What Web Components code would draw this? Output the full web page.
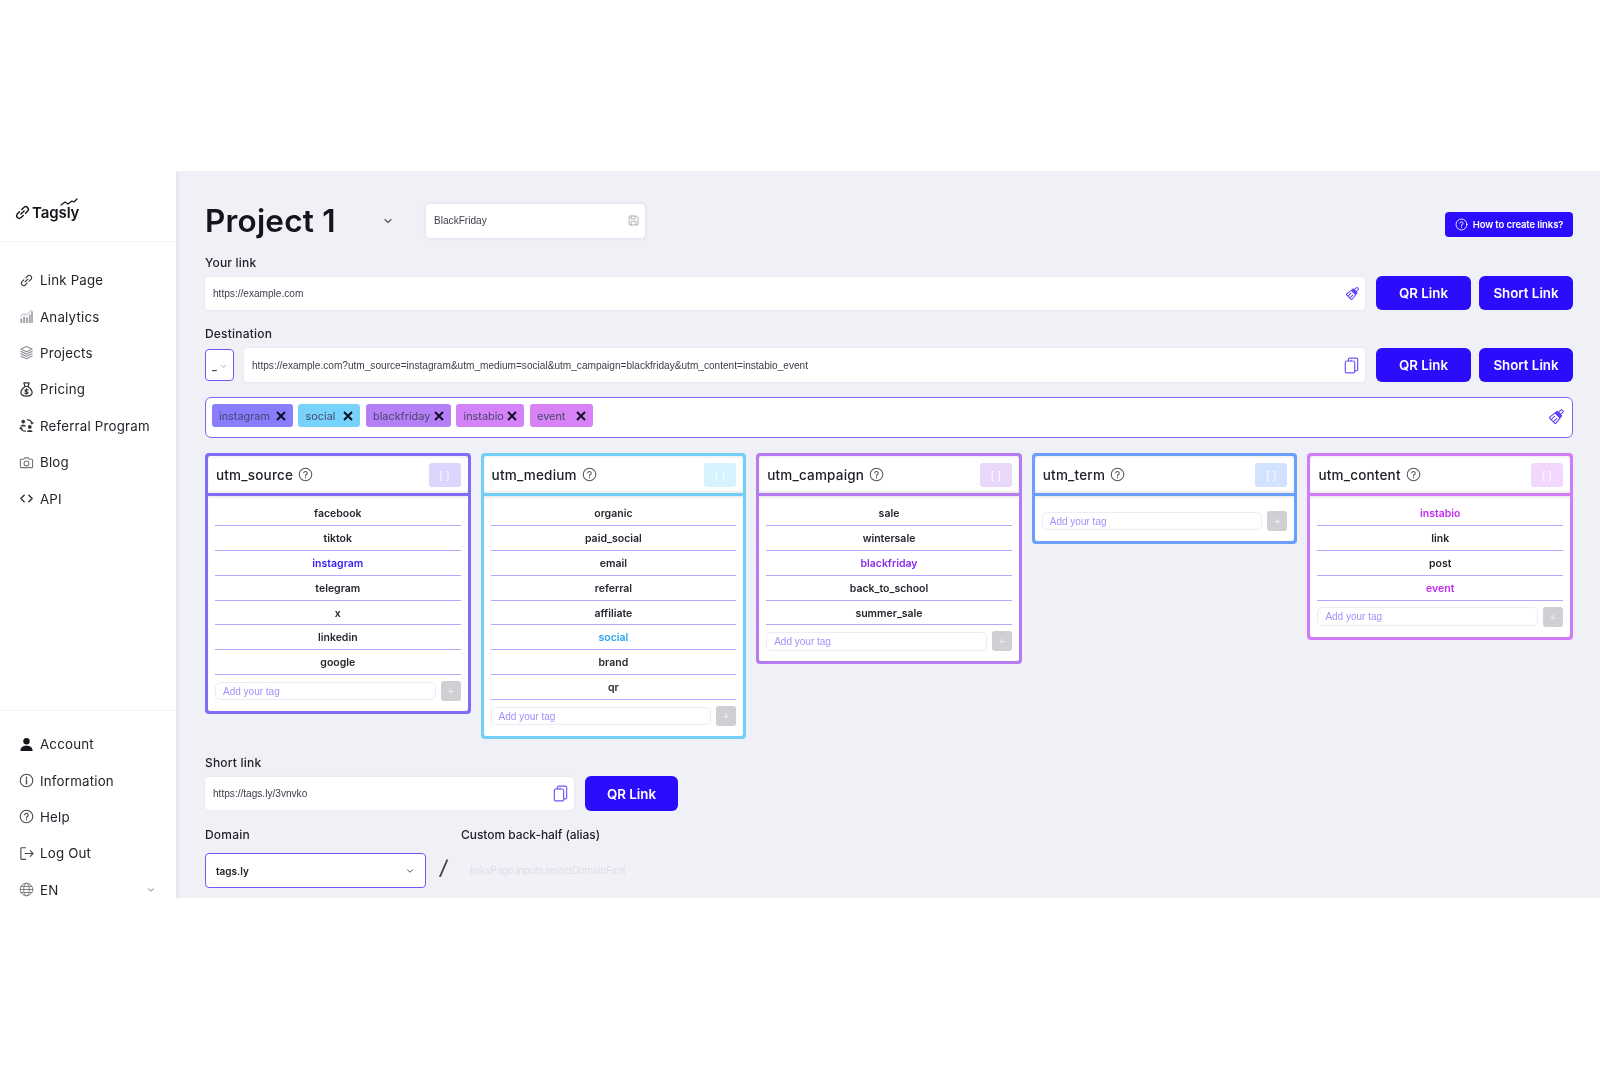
<!DOCTYPE html>
<html lang="en"><head><meta charset="utf-8"><title>Tagsly</title>
<style>
html,body{margin:0;background:#fff;}
body{font-family:"Inter","Liberation Sans",sans-serif;color:#16161e;}
</style></head><body>
<app-shell>
  <side-bar slot="side"></side-bar>
  <main-pane slot="main"></main-pane>
</app-shell>
<script>
const ICONS={
 link:'<path d="M6.500 9.500l3-3M5.200 7.300L3 9.500a2.500 2.500 0 0 0 3.500 3.500L8.700 10.800M7.300 5.200L9.500 3a2.500 2.500 0 0 1 3.500 3.500L10.800 8.700"/>',
 chart:'<g fill="currentColor" stroke="none"><rect x="1.500" y="10" width="2" height="5"/><rect x="4.500" y="8" width="2" height="7"/><rect x="7.500" y="9" width="2" height="6"/><rect x="10.500" y="6" width="2" height="9"/><rect x="13" y="2.500" width="1.800" height="12.500"/></g><path d="M1.500 7.500L5 5l3 1.500L13 1.500" stroke-width=".9"/>',
 layers:'<path d="M8 1.500l6 2.800-6 2.800-6-2.800zM2 6.800l6 2.800 6-2.800M2 9.300l6 2.800 6-2.800M2 11.800l6 2.800 6-2.800"/>',
 bag:'<path d="M5.200 1h5.600L9.600 4.800H6.400zM6.400 4.800C3.800 6.800 2 9 2 11.200c0 2.800 2.400 3.800 6 3.800s6-1 6-3.800c0-2.200-1.800-4.400-4.400-6.400"/><path d="M8 7.200v5.600M9.700 8.500C9 7.800 6.400 7.900 6.400 9.300S9.700 10 9.700 11.400 7 12.700 6.300 11.800" stroke-width="1.200"/>',
 ref:'<circle cx="4.500" cy="3.800" r="2" fill="currentColor" stroke="none"/><path d="M1.500 9c0-2.400 6-2.400 6 0z" fill="currentColor" stroke="none"/><circle cx="11.500" cy="9.500" r="2" fill="currentColor" stroke="none"/><path d="M8.500 15c0-3 6-3 6 0z" fill="currentColor" stroke="none"/><path d="M9 2c2.500 0 4.500 1.500 4.800 4M12.800 4.800l1 1.400 1.200-1.200M7 14c-2.500 0-4.500-1-5-3.500M3.200 11.400l-1.100-1.300L1 11.300" stroke-width="1.200"/>',
 camera:'<path d="M2.500 4.500h2.500l1-1.500h4l1 1.500h2.500a1 1 0 0 1 1 1v7a1 1 0 0 1-1 1h-11a1 1 0 0 1-1-1v-7a1 1 0 0 1 1-1z"/><circle cx="8" cy="9" r="2.600"/>',
 code:'<path d="M5.500 4.500L2 8l3.500 3.500M10.500 4.500L14 8l-3.500 3.500" stroke-width="1.600"/>',
 user:'<circle cx="8" cy="4.500" r="3.400" fill="currentColor" stroke="none"/><path d="M1.500 15c0-4 2.500-5.700 6.500-5.700s6.500 1.700 6.500 5.700z" fill="currentColor" stroke="none"/>',
 info:'<circle cx="8" cy="8" r="6.700"/><path d="M8 7.200v4.200M8 4.400v1.200" stroke-width="1.500"/>',
 help:'<circle cx="8" cy="8" r="6.700"/><path d="M6.100 6.300A1.900 1.900 0 1 1 8 8.500v1.100M8 11.300v.3"/>',
 logout:'<path d="M7 1.800H3a1 1 0 0 0-1 1v10.400a1 1 0 0 0 1 1h4M6.500 8H15M12 5l3 3-3 3"/>',
 globe:'<circle cx="8" cy="8" r="6.700"/><ellipse cx="8" cy="8" rx="3" ry="6.700"/><path d="M1.300 8h13.400M2.300 4.800h11.400M2.300 11.200h11.400"/>',
 copy:'<rect x="2.200" y="3.800" width="8.800" height="11.200" rx="1.300"/><path d="M5 3.800V2.300A1.300 1.300 0 0 1 6.300 1h6.200a1.300 1.300 0 0 1 1.300 1.300v9.400a1.300 1.300 0 0 1-1.300 1.300H11M7.500 3.800V2.800"/>',
 broom:'<g transform="rotate(45 8 8)"><rect x="6.500" y=".2" width="3" height="4.300" rx=".6"/><rect x="4.800" y="4.500" width="6.400" height="2.600" fill="currentColor"/><path d="M4.500 7.100h7l1 7.600h-9zM6.500 9.800v4.900M9.500 9.800v4.900"/></g>',
 save:'<path d="M2.500 3.500a1 1 0 0 1 1-1h8l2 2v8a1 1 0 0 1-1 1h-9a1 1 0 0 1-1-1zM5 2.500v3.500h5V2.500M5 13.500V9h6v4.500"/>',
 chev:'<path d="M4 6l4 4 4-4" stroke-width="1.500"/>'
};
const ico=(n,s=16,c='currentColor',w=1.1)=>`<svg width="${s}" height="${s}" viewBox="0 0 16 16" fill="none" stroke="${c}" color="${c}" stroke-width="${w}" stroke-linecap="round" stroke-linejoin="round" aria-hidden="true">${ICONS[n]}</svg>`;

class AppShell extends HTMLElement{constructor(){super();this.attachShadow({mode:'open'}).innerHTML=`<style>
:host{display:block;padding:171px 0 169px;}
.f{display:grid;grid-template-columns:176px 1fr;height:727px;background:#f0f0f7;overflow:hidden;filter:blur(.3px)}
</style><div class="f"><slot name="side"></slot><slot name="main"></slot></div>`}}
customElements.define('app-shell',AppShell);

class NavItem extends HTMLElement{connectedCallback(){const i=this.getAttribute('icon'),c=this.getAttribute('tone')||'#4b4c54',w=this.getAttribute('sw')||1.2;
this.attachShadow({mode:'open'}).innerHTML=`<style>
:host{display:flex;align-items:center;height:36.4px;padding-left:18.500px;gap:6.500px;font:400 13.300px "Inter",sans-serif;color:#24242c;letter-spacing:.2px}
svg{flex:none}.c{margin-left:auto;margin-right:20px;display:flex}
</style>${ico(i,15,c,w)}<slot></slot>${this.hasAttribute('chev')?`<span class="c">${ico('chev',10,'#777')}</span>`:''}`}}
customElements.define('nav-item',NavItem);

class SideBar extends HTMLElement{constructor(){super();this.attachShadow({mode:'open'}).innerHTML=`<style>
:host{display:block;background:#fff;box-shadow:1px 0 3px rgba(120,120,160,.15)}
.logo{height:71px;box-sizing:border-box;border-bottom:1px solid #f3f3f6;display:flex;align-items:center;padding:13px 0 0 13.500px;gap:1.500px;font:600 15px "Inter",sans-serif;color:#14141a;letter-spacing:-.1px}
.logo b{font-weight:600;position:relative}
.logo svg.sw{position:absolute;left:28px;top:-5px}
.top{height:469px;box-sizing:border-box;padding-top:20px;border-bottom:1px solid #f3f3f6}
.bot{padding:15px 0 0}
</style>
<div class="logo">${ico('link',17,'#14141a',1.300)}<b>Tagsly<svg class="sw" width="18" height="8" viewBox="0 0 18 8" fill="none" stroke="#14141a" stroke-width="1.200" stroke-linecap="round" stroke-linejoin="round"><path d="M1 7l4-3 3 2 4-3 2 1 3-3"/></svg></b></div>
<div class="top">
<nav-item icon="link" tone="#33343a">Link Page</nav-item><nav-item icon="chart" tone="#a2a3aa">Analytics</nav-item><nav-item icon="layers" tone="#8f9097">Projects</nav-item><nav-item icon="bag" tone="#33343a" sw="1.300">Pricing</nav-item><nav-item icon="ref" tone="#33343a">Referral Program</nav-item><nav-item icon="camera" tone="#77787e">Blog</nav-item><nav-item icon="code" tone="#33343a">API</nav-item>
</div>
<div class="bot">
<nav-item icon="user" tone="#16161e">Account</nav-item><nav-item icon="info">Information</nav-item><nav-item icon="help">Help</nav-item><nav-item icon="logout">Log Out</nav-item><nav-item icon="globe" tone="#77787e" sw="1" chev>EN</nav-item>
</div>`;
}}
customElements.define('side-bar',SideBar);

class BlueBtn extends HTMLElement{constructor(){super();this.attachShadow({mode:'open'}).innerHTML=`<style>
:host{display:inline-flex;align-items:center;justify-content:center;box-sizing:border-box;width:95px;height:34px;background:#2c0dfb;color:#fff;border-radius:6px;font:600 13.300px "Inter",sans-serif;white-space:nowrap;flex:none}
</style><slot></slot>`}}
customElements.define('blue-btn',BlueBtn);

class TextBox extends HTMLElement{connectedCallback(){const i=this.getAttribute('icon');
this.attachShadow({mode:'open'}).innerHTML=`<style>
:host{display:flex;align-items:center;box-sizing:border-box;height:33px;background:#fff;border-radius:4px;padding:0 5px 0 8px;font:10.100px "Liberation Sans",sans-serif;color:#3c3d48;box-shadow:0 0 2px rgba(120,120,160,.12);min-width:0}
span{flex:1;white-space:nowrap;overflow:hidden}svg{flex:none}
</style><span><slot></slot></span>${i?ico(i,+(this.getAttribute('size')||15),this.getAttribute('tone')||'#6e58f6',this.getAttribute('sw')||1.1):''}`}}
customElements.define('text-box',TextBox);

class TagChip extends HTMLElement{connectedCallback(){this.attachShadow({mode:'open'}).innerHTML=`<style>
:host{display:inline-flex;align-items:center;justify-content:space-between;box-sizing:border-box;height:23px;padding:0 7px 0 7.500px;border-radius:3px;background:${this.getAttribute('bg')};width:${this.getAttribute('w')}px;font:400 10.900px "Inter",sans-serif;color:#47476e;flex:none}
svg{flex:none}
</style><slot></slot><svg width="10" height="10" viewBox="0 0 10 10" fill="none" stroke="#0d0d22" stroke-width="1.900"><path d="M1 1l8 8M9 1L1 9"/></svg>`}}
customElements.define('tag-chip',TagChip);

class UtmColumn extends HTMLElement{connectedCallback(){
const col=this.getAttribute('col'),name=this.getAttribute('name'),soft=this.getAttribute('soft');
const items=(this.getAttribute('items')||'').split(',').filter(Boolean).map(s=>{const[t,c]=s.split(':');return `<div class="it"${c?` style="color:${c}"`:''}>${t}</div>`}).join('');
this.attachShadow({mode:'open'}).innerHTML=`<style>
:host{display:block;align-self:start;background:${col};border-radius:4px;padding:3px}
.hd{height:37px;background:#fff;border-radius:2px 2px 0 0;display:flex;align-items:center;padding:0 7px 0 8px;font:450 13.500px "Inter",sans-serif;color:#20202a;gap:5px;letter-spacing:.2px;box-shadow:inset 0 -2px 2px rgba(0,0,0,.07),inset 0 2px 2px rgba(0,0,0,.05)}
.br{margin-left:auto;width:32px;height:24px;border-radius:3px;background:${soft};color:rgba(255,255,255,.85);display:flex;align-items:center;justify-content:center;font:11px "Liberation Sans",sans-serif}
.bd{margin-top:3px;background:#fff;border-radius:0 0 2px 2px;padding:5px 7px 10px;box-shadow:inset 0 2px 2px rgba(0,0,0,.07)}
.it{height:24.900px;box-sizing:border-box;display:flex;align-items:center;justify-content:center;border-bottom:1.300px solid #b5a7fb;font:600 10.500px "Inter",sans-serif;color:#26262e;padding-top:1px}
.add{display:flex;align-items:center;gap:5px;margin-top:6px}
.bd.e .add{margin-top:10px}
.in{flex:1;height:18.500px;box-sizing:border-box;border:1px solid #ececf2;border-radius:5px;padding-left:7px;display:flex;align-items:center;font:10px "Liberation Sans",sans-serif;color:#a193fb}
.pl{width:20px;height:20px;border-radius:3px;background:#cfcfd4;color:#eee;display:flex;align-items:center;justify-content:center;font:11px "Liberation Sans",sans-serif}
svg{flex:none}
</style><div class="hd"><span>${name}</span>${ico('help',15,'#55565e')}<div class="br">[ ]</div></div>
<div class="bd${items?'':' e'}">${items}<div class="add"><div class="in">Add your tag</div><div class="pl">+</div></div></div>`}}
customElements.define('utm-column',UtmColumn);

class MainPane extends HTMLElement{constructor(){super();
const C={a:'#3a22f5',b:'#2aa6ee',c:'#8a2cee',d:'#c22cf2'};
this.attachShadow({mode:'open'}).innerHTML=`<style>
:host{display:block;padding:32px 27px 0 29px;min-width:0}
.lb{font:500 12px "Inter",sans-serif;color:#22222a;line-height:15px;letter-spacing:.2px}
.head{display:flex;align-items:center;height:35px;margin-bottom:17px}
h1{margin:0;width:177px;font:600 31.500px "Inter",sans-serif;color:#14141c;letter-spacing:.2px}
.bf{width:219px;height:34px;margin-left:32px;box-shadow:0 0 3px rgba(120,120,160,.25);flex:none}
.chev{display:flex;width:12px}
.how{margin-left:auto;width:128px;height:25px;background:#2c0dfb;border-radius:4px;color:#fff;display:flex;align-items:center;justify-content:center;gap:5px;font:600 9.500px "Inter",sans-serif;letter-spacing:-.1px;margin-top:8px}
.row{display:flex;gap:8px;margin-top:6px;align-items:center}
.row.d{margin-top:7px}
.row.d text-box{height:34px}
.row text-box{flex:1;margin-right:3.500px}
.row blue-btn+blue-btn{width:94px}
.sec{margin-top:16px}
.pick{flex:none;width:29px;height:32px;box-sizing:border-box;border:1.500px solid #6e58f6;border-radius:4px;background:#fff;display:flex;align-items:center;justify-content:center;gap:3px;font:700 10px "Inter",sans-serif;color:#444;margin-right:2px;padding-top:2px}
.tags{margin-top:15px;height:41px;box-sizing:border-box;border:1.500px solid #7b68f6;border-radius:6px;background:#fff;display:flex;align-items:center;gap:5.500px;padding:0 6px 4px 5.500px;margin-bottom:15px}
.tags .br{margin-left:auto;display:flex;margin-right:1px}
.cols{display:grid;grid-template-columns:repeat(5,1fr);gap:10px;height:301.500px;align-items:start}
.short{display:flex;gap:11px;margin-top:6.500px;align-items:center}
.short text-box{width:369px}
.short blue-btn{width:93px;height:35px}
.dom{display:flex;margin-top:15.500px}
.sel{width:221px;height:35px;box-sizing:border-box;border:1.500px solid #6e58f6;border-radius:4px;background:#fff;display:flex;align-items:center;justify-content:space-between;padding:0 10px;font:600 10px "Inter",sans-serif;color:#22222a;margin-top:11.500px}
.sl{width:35px;text-align:center;font:500 20px "Inter",sans-serif;color:#444;margin-top:29px;font-style:italic}
.lb.c{letter-spacing:-.05px}
.al{width:215px;height:30px;margin-top:13.500px;background:#f1f1f8;box-sizing:border-box;padding:0 9px;display:flex;align-items:center;font:10px "Liberation Sans",sans-serif;color:#dcdce4}
</style>
<div class="head"><h1>Project 1</h1><span class="chev">${ico('chev',12,'#55565e')}</span>
<text-box class="bf" icon="save" size="13" tone="#a8a8b0">BlackFriday</text-box>
<div class="how">${ico('help',13,'#fff')}How to create links?</div></div>
<div class="lb">Your link</div>
<div class="row"><text-box icon="broom" size="14" tone="#5b44f5">https://example.com</text-box><blue-btn>QR Link</blue-btn><blue-btn>Short Link</blue-btn></div>
<div class="lb sec">Destination</div>
<div class="row d"><div class="pick">_${ico('chev',7,'#777')}</div><text-box icon="copy" size="17" tone="#6e58f6">https://example.com?utm_source=instagram&amp;utm_medium=social&amp;utm_campaign=blackfriday&amp;utm_content=instabio_event</text-box><blue-btn>QR Link</blue-btn><blue-btn>Short Link</blue-btn></div>
<div class="tags"><tag-chip bg="#8a7dfb" w="81">instagram</tag-chip><tag-chip bg="#77d3fb" w="62">social</tag-chip><tag-chip bg="#b57ff6" w="85">blackfriday</tag-chip><tag-chip bg="#d482f7" w="68">instabio</tag-chip><tag-chip bg="#d783f6" w="63">event</tag-chip><span class="br">${ico('broom',16,'#5b44f5')}</span></div>
<div class="cols">
<utm-column name="utm_source" col="#7f6cf8" soft="#dbd6fd" items="facebook,tiktok,instagram:${C.a},telegram,x,linkedin,google"></utm-column>
<utm-column name="utm_medium" col="#72d0f8" soft="#d6f2fd" items="organic,paid_social,email,referral,affiliate,social:${C.b},brand,qr"></utm-column>
<utm-column name="utm_campaign" col="#b57cf2" soft="#ead8fb" items="sale,wintersale,blackfriday:${C.c},back_to_school,summer_sale"></utm-column>
<utm-column name="utm_term" col="#6a9ffb" soft="#d3e2fe" items=""></utm-column>
<utm-column name="utm_content" col="#d07cf6" soft="#f2d8fd" items="instabio:${C.d},link,post,event:${C.d}"></utm-column>
</div>
<div class="lb">Short link</div>
<div class="short"><text-box icon="copy" size="17" tone="#6e58f6">https://tags.ly/3vnvko</text-box><blue-btn>QR Link</blue-btn></div>
<div class="dom"><div><div class="lb">Domain</div><div class="sel">tags.ly${ico('chev',10,'#444')}</div></div>
<div class="sl">/</div>
<div><div class="lb c">Custom back-half (alias)</div><div class="al">linksPage.inputs.selectDomainFirst</div></div></div>`}}
customElements.define('main-pane',MainPane);
</script>
</body></html>
